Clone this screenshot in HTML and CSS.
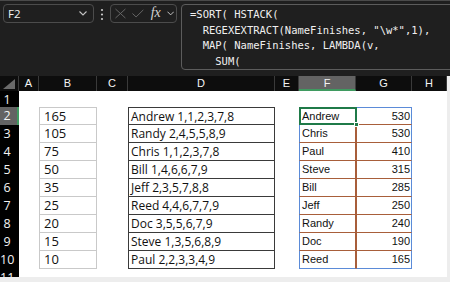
FILE: index.html
```html
<!DOCTYPE html>
<html lang="en">
<head>
    <meta charset="UTF-8">
    <meta name="viewport" content="width=device-width, initial-scale=1.0">
    <title>SORT HSTACK</title>
    <link rel="stylesheet" href="styles.css">
</head>
<body>
    <div class="app">
        <div class="formula-bar">
            <div class="name-box">
                <span>F2</span>
                <svg class="chev" width="8" height="5" viewBox="0 0 8 5"><path d="M0.5 0.5 L4 4 L7.5 0.5" fill="none" stroke="#c4c4c4" stroke-width="1.1"/></svg>
            </div>
            <svg class="dots" width="4" height="14" viewBox="0 0 4 14"><circle cx="2" cy="2" r="1.1" fill="#c8c8c8"/><circle cx="2" cy="6.5" r="1.1" fill="#c8c8c8"/><circle cx="2" cy="11" r="1.1" fill="#c8c8c8"/></svg>
            <div class="fn-box">
                <svg width="12" height="11" viewBox="0 0 12 11"><path d="M0.5 0.5 L11.5 10.5 M11.5 0.5 L0.5 10.5" stroke="#6c6c6c" stroke-width="1"/></svg>
                <svg width="13" height="9" viewBox="0 0 13 9"><path d="M0.5 4.5 L4.5 8.3 L12.5 0.5" fill="none" stroke="#6c6c6c" stroke-width="1"/></svg>
                <span class="fx">fx</span>
                <svg class="chev" width="8" height="5" viewBox="0 0 8 5"><path d="M0.5 0.5 L4 4 L7.5 0.5" fill="none" stroke="#c4c4c4" stroke-width="1.1"/></svg>
            </div>
            <pre class="formula">=SORT( HSTACK(
  REGEXEXTRACT(NameFinishes, "\w*",1),
  MAP( NameFinishes, LAMBDA(v,
    SUM(</pre>
        </div>

        <div class="sheet">
            <div class="ch corner"><svg width="12" height="10" viewBox="0 0 12 10"><path d="M0 10 L12 10 L12 0 Z" fill="#6a6a6a"/></svg></div>
            <div class="ch">A</div><div class="ch">B</div><div class="ch">C</div><div class="ch">D</div>
            <div class="ch">E</div><div class="ch sel">F</div><div class="ch">G</div><div class="ch">H</div>

            <div class="rh">1</div><div></div><div></div><div></div><div></div><div></div><div></div><div></div><div></div>

            <div class="rh sel">2</div><div></div><div class="b first">165</div><div></div><div class="d first">Andrew 1,1,2,3,7,8</div><div></div><div class="f first active">Andrew</div><div class="g first">530</div><div></div>
            <div class="rh">3</div><div></div><div class="b">105</div><div></div><div class="d">Randy 2,4,5,5,8,9</div><div></div><div class="f">Chris</div><div class="g">530</div><div></div>
            <div class="rh">4</div><div></div><div class="b">75</div><div></div><div class="d">Chris 1,1,2,3,7,8</div><div></div><div class="f">Paul</div><div class="g">410</div><div></div>
            <div class="rh">5</div><div></div><div class="b">50</div><div></div><div class="d">Bill 1,4,6,6,7,9</div><div></div><div class="f">Steve</div><div class="g">315</div><div></div>
            <div class="rh">6</div><div></div><div class="b">35</div><div></div><div class="d">Jeff 2,3,5,7,8,8</div><div></div><div class="f">Bill</div><div class="g">285</div><div></div>
            <div class="rh">7</div><div></div><div class="b">25</div><div></div><div class="d">Reed 4,4,6,7,7,9</div><div></div><div class="f">Jeff</div><div class="g">250</div><div></div>
            <div class="rh">8</div><div></div><div class="b">20</div><div></div><div class="d">Doc 3,5,5,6,7,9</div><div></div><div class="f">Randy</div><div class="g">240</div><div></div>
            <div class="rh">9</div><div></div><div class="b">15</div><div></div><div class="d">Steve 1,3,5,6,8,9</div><div></div><div class="f">Doc</div><div class="g">190</div><div></div>
            <div class="rh">10</div><div></div><div class="b">10</div><div></div><div class="d">Paul 2,2,3,3,4,9</div><div></div><div class="f last">Reed</div><div class="g last">165</div><div></div>

            <div class="rh">11</div><div></div><div></div><div></div><div></div><div></div><div></div><div></div><div></div>
        </div>
    </div>
</body>
</html>
```

FILE: styles.css
```css
body {
    margin: 0;
    background: #ededed;
    font-family: "Open Sans", "Noto Sans", sans-serif;
}
.app {
    width: 450px;
    height: 282px;
    overflow: hidden;
}
.formula-bar {
    height: 76px;
    box-sizing: border-box;
    background: #1f1f1f;
    border-top: 1px solid #4a4a4a;
    display: flex;
    align-items: flex-start;
    padding: 3px 0 0 3px;
}
.name-box {
    width: 91px;
    height: 19px;
    box-sizing: border-box;
    border: 1px solid #4c4c4c;
    border-radius: 4px;
    display: flex;
    align-items: center;
    justify-content: space-between;
    padding: 0 6px 0 4px;
    color: #f2f2f2;
    font-size: 11.5px;
}
.dots {
    margin: 4px 6px 0 6px;
}
.fn-box {
    width: 67px;
    height: 19px;
    box-sizing: border-box;
    border: 1px solid #4c4c4c;
    border-radius: 4px;
    display: flex;
    align-items: center;
    gap: 6px;
    padding: 0 2px 0 4px;
}
.fx {
    font-family: "Liberation Serif", serif;
    font-style: italic;
    font-size: 14px;
    color: #d2d2d2;
    line-height: 1;
    margin-left: 1px;
    margin-top: -2px;
}
.formula {
    flex: 1;
    height: 66px;
    box-sizing: border-box;
    margin: 0 -4px 0 4px;
    border: 1px solid #5c5c5c;
    border-radius: 4px;
    padding: 2px 0 0 8px;
    font-family: "DejaVu Sans Mono", monospace;
    font-size: 10.5px;
    line-height: 15.7px;
    color: #f0f0f0;
}

.sheet {
    width: 447px;
    display: grid;
    grid-template-columns: 19px 20px 58px 31px 147px 24px 57px 56px 35px;
    grid-template-rows: 15px 16px repeat(9, 18px) 8px;
    background: #fff;
    overflow: hidden;
}
.sheet > div {
    box-sizing: border-box;
    overflow: hidden;
    white-space: nowrap;
}
.ch {
    background: #0d0d0d;
    color: #f4f4f4;
    border-right: 1px solid #3a3a3a;
    font-family: "Liberation Sans", sans-serif;
    font-size: 11px;
    line-height: 15px;
    text-align: center;
}
.ch.sel {
    background: #636363;
    border-bottom: 2px solid #3f9a60;
    line-height: 14px;
}
.corner {
    display: flex;
    align-items: flex-end;
    justify-content: flex-end;
    padding: 0 3px 2px 0;
}
.rh {
    background: #000;
    color: #f4f4f4;
    font-size: 12.5px;
    line-height: 18px;
    text-align: center;
    padding-right: 5px;
}
.rh.sel {
    background: #636363;
    border-right: 2px solid #3f9a60;
    padding-right: 3px;
}
.b, .d {
    font-size: 12px;
    line-height: 17px;
    color: #111;
}
.b {
    border: 1px solid #c9c9c9;
    border-top: none;
    padding-left: 4px;
    font-size: 13px;
}
.d {
    border: 1px solid #3a3a3a;
    border-top: none;
    padding-left: 2px;
}
.b.first { border-top: 1px solid #c9c9c9; }
.d.first { border-top: 1px solid #3a3a3a; }
.f, .g {
    font-family: "Liberation Sans", sans-serif;
    font-size: 11px;
    line-height: 17px;
    color: #111;
    border-bottom: 1px solid #a85e3a;
}
.f {
    border-left: 1px solid #5b8bd8;
    border-right: 1px solid #a85e3a;
    padding-left: 2px;
}
.g {
    border-left: 1px solid #a85e3a;
    border-right: 1px solid #5b8bd8;
    text-align: right;
    padding-right: 1px;
}
.f.first, .g.first { border-top: 1px solid #5b8bd8; }
.f.last, .g.last { border-bottom: 1px solid #5b8bd8; }
.sheet > .active {
    position: relative;
    overflow: visible;
}
.active::after {
    content: "";
    position: absolute;
    left: -1px;
    top: -1px;
    right: -2px;
    bottom: -1px;
    border: 2px solid #1f7a48;
}
.active::before {
    content: "";
    position: absolute;
    right: -4px;
    bottom: -3px;
    width: 5px;
    height: 5px;
    background: #1f7a48;
    border: 1px solid #fff;
    box-sizing: border-box;
    z-index: 1;
}
```
